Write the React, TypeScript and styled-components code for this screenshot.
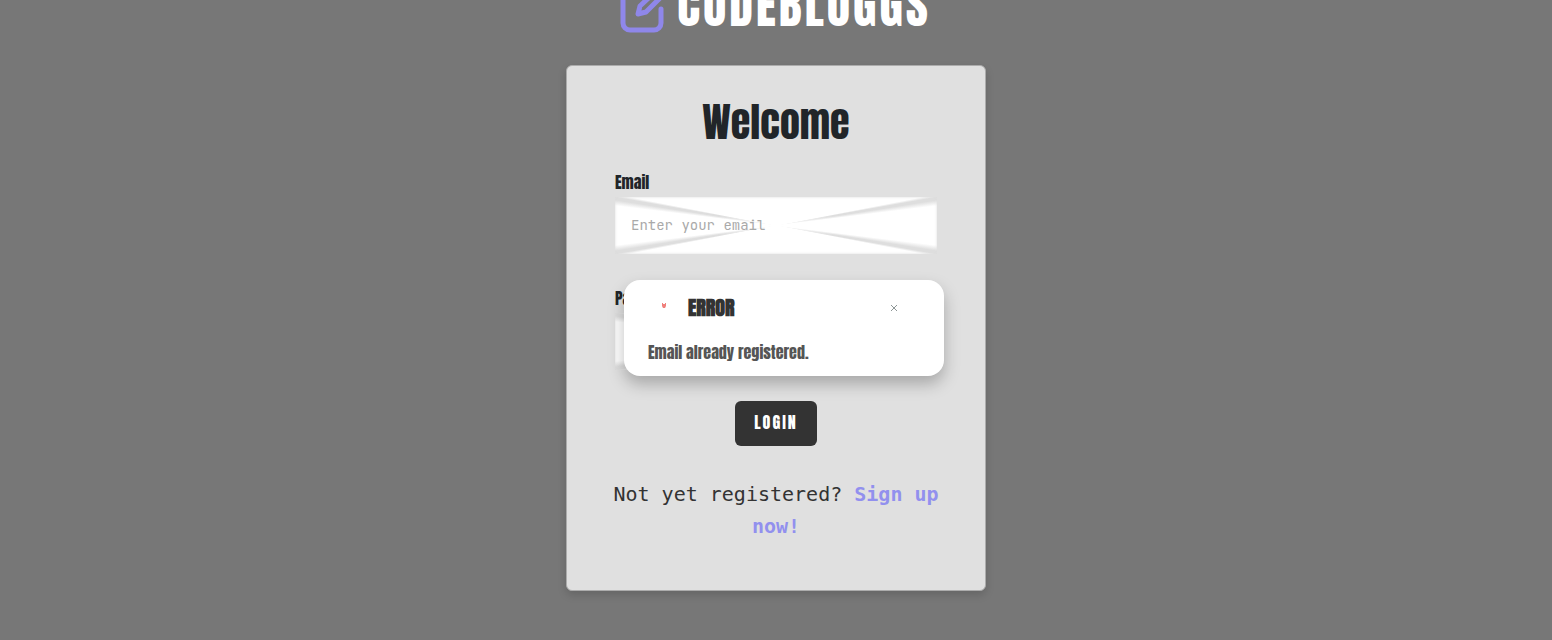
import React from "react";
import styled, { createGlobalStyle } from "styled-components";

const display = `Anton, "Liberation Sans Narrow", "Roboto Condensed", "Liberation Sans", sans-serif`;
const mono = `"DejaVu Sans Mono", monospace`;

const GlobalStyle = createGlobalStyle`
  *, *::before, *::after { box-sizing: border-box; }
  body { margin: 0; background: #777777; overflow: hidden; }
`;

const Page = styled.main`
  position: relative;
  display: flex;
  flex-direction: column;
  align-items: center;
  min-height: 100vh;
`;

const Brand = styled.header`
  display: flex;
  align-items: flex-end;
  gap: 12px;
  height: 64px;
  margin: -31px 0 32px;
  padding-right: 4px;
`;

const BrandIcon = styled.svg`
  width: 48px;
  height: 64px;
`;

const BrandName = styled.span`
  font: 400 48px/54px ${display};
  letter-spacing: 3px;
  color: #ffffff;
`;

const Card = styled.section`
  width: 100%;
  max-width: 420px;
  padding: 32px 46px 48px;
  background: #e0e0e0;
  border: 1px solid #acacac;
  border-radius: 6px;
  box-shadow: 0 4px 8px rgba(0, 0, 0, 0.15);
`;

const Form = styled.form`
  display: flex;
  flex-direction: column;
  padding: 0 2px;
`;

const Title = styled.h1`
  margin: 0 0 24px;
  font: 400 40px/48px ${display};
  color: #212529;
  text-align: center;
`;

const Field = styled.div`
  display: flex;
  flex-direction: column;

  & + & {
    margin-top: 32px;
  }
`;

const Label = styled.label`
  margin-bottom: 3px;
  font: 400 16px/24px ${display};
  color: #212529;
`;

const TextInput = styled.input`
  width: 100%;
  height: 57px;
  padding: 0 16px 2px;
  border: 0;
  border-radius: 0;
  font: 400 14px/24px "JetBrains Mono", "Liberation Mono", monospace;
  color: #333333;
  background:
    radial-gradient(ellipse 60px 40px at center, #fff 5%, transparent 100%),
    conic-gradient(
      #fff 0deg 79deg, #dedede 80deg 81deg, #fff 83deg 97deg,
      #dedede 99deg 100deg, #fff 101deg 259deg, #dedede 260deg 261deg,
      #fff 263deg 277deg, #dedede 279deg 280deg, #fff 281deg
    );
  box-shadow: inset 0 0 3px #dddddd;
  &::placeholder { color: #a9a9a9; opacity: 1; }
`;

const LoginButton = styled.button`
  align-self: center;
  height: 45px;
  margin-top: 31px;
  padding: 0 19px 4px;
  border: 0;
  border-radius: 6px;
  background: #333333;
  color: #ffffff;
  font: 400 16px/24px ${display};
  letter-spacing: 2px;
`;

const Prompt = styled.p`
  margin: 32px 0 0;
  font: 400 20px/32px ${mono};
  color: #333333;
  text-align: center;
`;

const SignUp = styled.a`
  font-weight: 700;
  color: #9290ee;
  text-decoration: none;
`;

const Toast = styled.div`
  position: absolute;
  top: 280px;
  left: calc(50% - 152px);
  width: 320px;
  height: 96px;
  padding: 12px 24px;
  border-radius: 16px;
  background: #ffffff;
  box-shadow: 0 8px 16px rgba(0, 0, 0, 0.25);
`;

const ToastHeader = styled.div`
  display: flex;
  align-items: center;
  height: 32px;
`;

const AlertIcon = styled.svg`
  width: 32px;
  height: 32px;
  margin-right: 8px;
`;

const ToastTitle = styled.strong`
  flex: 1;
  font: 700 20px/32px ${display};
  color: #333333;
`;

const CloseButton = styled.button`
  display: flex;
  align-items: center;
  justify-content: center;
  width: 52px;
  height: 32px;
  padding: 0;
  border: 0;
  background: transparent;
`;

const ToastText = styled.p`
  margin: 16px 0 0;
  font: 400 16px/24px ${display};
  color: #555555;
`;

export default function App() {
  return (
    <>
      <GlobalStyle />
      <Page>
        <Brand>
          <BrandIcon viewBox="0 0 48 64" fill="none" stroke="#8f87ea" strokeWidth="5" strokeLinecap="round" strokeLinejoin="round" aria-hidden="true">
            <path d="M22 23H12a6 6 0 0 0-6 6v25a7 7 0 0 0 7 7h24a7 7 0 0 0 7-7V40" />
            <path d="M39 22a4 4 0 0 1 5 6L29 43l-8 2 2-8z" />
          </BrandIcon>
          <BrandName>CODEBLOGGS</BrandName>
        </Brand>
        <Card>
          <Form onSubmit={(e) => e.preventDefault()}>
            <Title>Welcome</Title>
            <Field>
              <Label htmlFor="email">Email</Label>
              <TextInput id="email" type="email" placeholder="Enter your email" />
            </Field>
            <Field>
              <Label htmlFor="password">Password</Label>
              <TextInput id="password" type="password" />
            </Field>
            <LoginButton type="submit">LOGIN</LoginButton>
          </Form>
          <Prompt>
            Not yet registered? <SignUp href="#signup">Sign up now!</SignUp>
          </Prompt>
        </Card>
        <Toast role="alert">
          <ToastHeader>
            <AlertIcon viewBox="0 0 32 32" fill="#f0807c" aria-hidden="true">
              <path d="M14 11h1v1h2v-1h1v3l-1 2h-2l-1-2z" />
            </AlertIcon>
            <ToastTitle>ERROR</ToastTitle>
            <CloseButton type="button" aria-label="Close">
              <svg width="8" height="8" viewBox="0 0 8 8" stroke="#8d9696" strokeWidth="1" aria-hidden="true">
                <path d="M1 1l6 6M7 1L1 7" />
                <path d="M3 4h2" strokeWidth="2" />
              </svg>
            </CloseButton>
          </ToastHeader>
          <ToastText>Email already registered.</ToastText>
        </Toast>
      </Page>
    </>
  );
}
